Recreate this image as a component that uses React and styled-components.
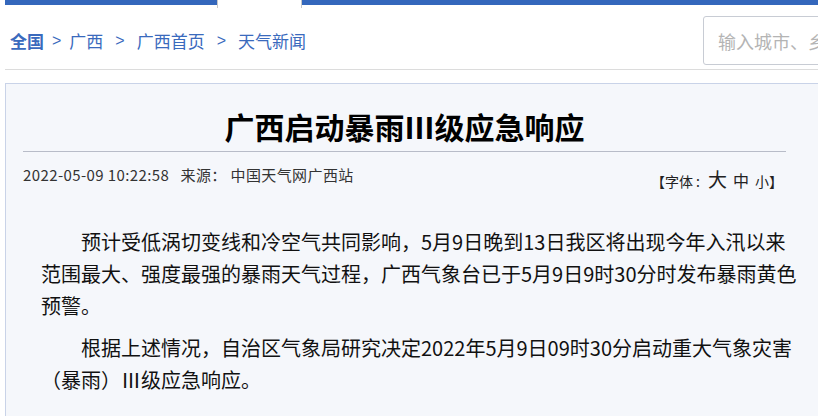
import React from 'react'
import styled, { createGlobalStyle } from 'styled-components'

const GlobalStyle = createGlobalStyle`
    html, body {
        margin: 0;
        padding: 0;
        background: #fff;
        overflow: hidden;
    }
    body {
        font-family: "Noto Sans CJK SC", "Noto Sans", sans-serif;
        color: #222;
    }
`

const Page = styled.div`
    margin-left: 5px;
    width: 813px;
    overflow: hidden;
`

const TopBar = styled.div`
    display: flex;
    height: 5px;
`

const BarSegment = styled.div`
    background: #3467bc;
    height: 5px;
    width: ${(p) => (p.width ? `${p.width}px` : 'auto')};
    flex: ${(p) => (p.width ? '0 0 auto' : '1')};
`

const ActiveTab = styled.div`
    flex: 0 0 auto;
    width: 83px;
    height: 8px;
    background: #fff;
    border-left: 1px solid #c8c8c8;
    border-right: 1px solid #c8c8c8;
    position: relative;
    z-index: 1;
`

const Header = styled.div`
    display: grid;
    grid-template-columns: 698px 200px;
    align-items: center;
    padding: 11px 0 4px;
    border-bottom: 1px solid #dcdcdc;
`

const Crumbs = styled.nav`
    display: flex;
    align-items: center;
    padding-left: 5px;
    font-size: 17px;
    line-height: 24px;
    color: #3a6abd;
`

const Crumb = styled.a`
    color: #3a6abd;
    text-decoration: none;
    font-weight: ${(p) => (p.strong ? 700 : 400)};
`

const Sep = styled.span`
    font-family: "Liberation Sans", sans-serif;
    font-size: 16px;
    color: #3a6abd;
    margin: 0 ${(p) => (p.wide ? 12 : 8)}px;
`

const Search = styled.input`
    box-sizing: border-box;
    width: 200px;
    height: 49px;
    border: 1px solid #c8ccd4;
    border-radius: 3px;
    padding: 0 14px;
    font-family: "Noto Sans CJK SC", sans-serif;
    font-size: 18px;
    background: #fff;
    outline: none;

    &::placeholder {
        color: #b4b4b4;
    }
`

const Article = styled.article`
    margin-top: 13px;
    width: 809px;
    min-height: 400px;
    background: #f5f7fb;
    border: 1px solid #c9d3e8;
    padding-left: 17px;
`

const Head = styled.div`
    width: 763px;
`

const Title = styled.h1`
    margin: 0;
    padding: 22px 0 5px;
    text-align: center;
    font-size: 30px;
    line-height: 40px;
    font-weight: 700;
    color: #000;
    border-bottom: 1px solid #b8bcc8;
`

const Meta = styled.div`
    display: flex;
    justify-content: space-between;
    align-items: flex-start;
    padding: 13px 3px 0 0;
`

const Info = styled.div`
    font-size: 15px;
    line-height: 20px;
    letter-spacing: 0.4px;
    color: #333;
    white-space: pre;
`

const FontSwitch = styled.div`
    margin-top: 2px;
    display: flex;
    align-items: baseline;
    font-size: 14px;
    line-height: 24px;
    color: #222;
`

const SizeOption = styled.a`
    font-size: ${(p) => p.size}px;
    margin-left: ${(p) => p.gap || 0}px;
    color: #222;
    cursor: pointer;
`

const Body = styled.div`
    padding: 33px 0 0 18px;
    width: 759px;
`

const Para = styled.p`
    margin: 0 0 10px;
    font-size: 20px;
    line-height: 32px;
    text-indent: 2em;
    color: #111;
`

export default function App() {
    return (
        <Page>
            <GlobalStyle />
            <TopBar>
                <BarSegment width={212} />
                <ActiveTab />
                <BarSegment />
            </TopBar>
            <Header>
                <Crumbs>
                    <Crumb strong>全国</Crumb>
                    <Sep>&gt;</Sep>
                    <Crumb>广西</Crumb>
                    <Sep wide>&gt;</Sep>
                    <Crumb>广西首页</Crumb>
                    <Sep wide>&gt;</Sep>
                    <Crumb>天气新闻</Crumb>
                </Crumbs>
                <Search placeholder="输入城市、乡镇、街道、景点名称" />
            </Header>
            <Article>
                <Head>
                    <Title>广西启动暴雨Ⅲ级应急响应</Title>
                    <Meta>
                        <Info>{'2022-05-09 10:22:58   来源： 中国天气网广西站'}</Info>
                        <FontSwitch>
                            {'【字体 :'}
                            <SizeOption size={19} gap={8}>大</SizeOption>
                            <SizeOption size={16} gap={6}>中</SizeOption>
                            <SizeOption size={14} gap={6}>小</SizeOption>
                            】
                        </FontSwitch>
                    </Meta>
                </Head>
                <Body>
                    <Para>
                        预计受低涡切变线和冷空气共同影响，5月9日晚到13日我区将出现今年入汛以来范围最大、强度最强的暴雨天气过程，广西气象台已于5月9日9时30分时发布暴雨黄色预警。
                    </Para>
                    <Para>
                        根据上述情况，自治区气象局研究决定2022年5月9日09时30分启动重大气象灾害（暴雨）Ⅲ级应急响应。
                    </Para>
                </Body>
            </Article>
        </Page>
    )
}
